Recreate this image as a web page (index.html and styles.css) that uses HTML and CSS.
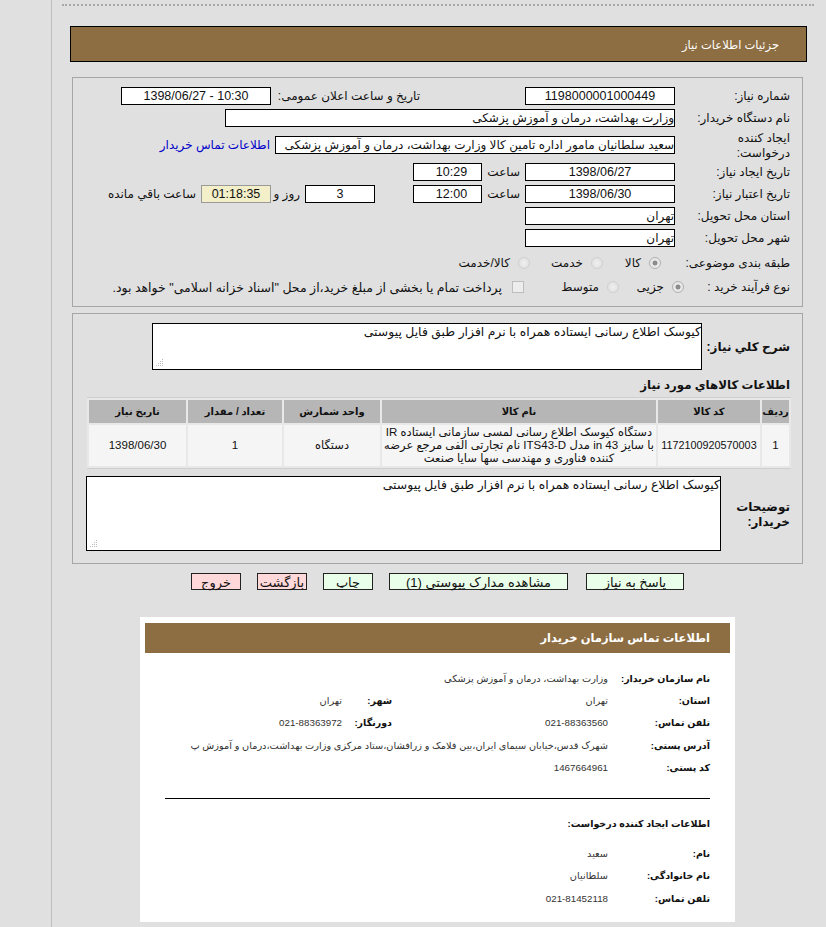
FILE: index.html
```html
<!DOCTYPE html>
<html lang="fa">
<head>
    <meta charset="UTF-8">
    <meta name="viewport" content="width=device-width, initial-scale=1.0">
    <title>جزئیات اطلاعات نیاز</title>
    <link rel="stylesheet" href="styles.css">
</head>
<body>
    <div class="side"></div>

    <div class="main" dir="rtl">
        <div class="dots"></div>

        <div class="page-title">جزئیات اطلاعات نیاز</div>

        <div class="panel panel-info">
            <div class="row">
                <div class="lbl">شماره نیاز:</div>
                <div class="field w150 center">1198000001000449</div>
                <div class="txt m105 t-pub">تاریخ و ساعت اعلان عمومی:</div>
                <div class="field w150 center" dir="ltr">1398/06/27 - 10:30</div>
            </div>
            <div class="row">
                <div class="lbl">نام دستگاه خریدار:</div>
                <div class="field w450">وزارت بهداشت، درمان و آموزش پزشکی</div>
            </div>
            <div class="row row-tall">
                <div class="lbl lbl-wrap">ایجاد کننده درخواست:</div>
                <div class="field w400">سعید سلطانیان مامور اداره تامین کالا وزارت بهداشت، درمان و آموزش پزشکی</div>
                <a class="link" href="#">اطلاعات تماس خریدار</a>
            </div>
            <div class="row">
                <div class="lbl">تاریخ ایجاد نیاز:</div>
                <div class="field w150 center">1398/06/27</div>
                <div class="txt w-saat">ساعت</div>
                <div class="field w69 center">10:29</div>
            </div>
            <div class="row">
                <div class="lbl">تاریخ اعتبار نیاز:</div>
                <div class="field w150 center">1398/06/30</div>
                <div class="txt w-saat">ساعت</div>
                <div class="field w69 center">12:00</div>
                <div class="field w70 center m38">3</div>
                <div class="txt w-rooz">روز و</div>
                <div class="timer">01:18:35</div>
                <div class="txt">ساعت باقي مانده</div>
            </div>
            <div class="row">
                <div class="lbl">استان محل تحویل:</div>
                <div class="field w150">تهران</div>
            </div>
            <div class="row">
                <div class="lbl">شهر محل تحویل:</div>
                <div class="field w150">تهران</div>
            </div>
            <div class="row row-opts row-opts-first">
                <div class="lbl lbl-narrow">طبقه بندی موضوعی:</div>
                <label class="opt o58"><input type="radio" name="cat" checked disabled>کالا</label>
                <label class="opt o73"><input type="radio" name="cat" disabled>خدمت</label>
                <label class="opt"><input type="radio" name="cat" disabled>کالا/خدمت</label>
            </div>
            <div class="row row-opts">
                <div class="lbl lbl-buy">نوع فرآیند خرید :</div>
                <label class="opt o65"><input type="radio" name="buy" checked disabled>جزیی</label>
                <label class="opt o95"><input type="radio" name="buy" disabled>متوسط</label>
                <label class="opt opt-check"><input type="checkbox" disabled>پرداخت تمام یا بخشی از مبلغ خرید،از محل "اسناد خزانه اسلامی" خواهد بود.</label>
            </div>
        </div>

        <div class="panel panel-desc">
            <div class="desc-row">
                <div class="lbl-big w88">شرح کلي نياز:</div>
                <div class="memo memo-small">کیوسک اطلاع رسانی ایستاده همراه با نرم افزار طبق فایل پیوستی</div>
            </div>

            <div class="section-title">اطلاعات كالاهاي مورد نياز</div>

            <table class="items">
                <thead>
                    <tr>
                        <th class="c-no">ردیف</th>
                        <th class="c-code">کد کالا</th>
                        <th class="c-name">نام کالا</th>
                        <th class="c-unit">واحد شمارش</th>
                        <th class="c-qty">تعداد / مقدار</th>
                        <th>تاریخ نیاز</th>
                    </tr>
                </thead>
                <tbody>
                    <tr>
                        <td>1</td>
                        <td class="code-cell">1172100920570003</td>
                        <td>دستگاه کیوسک اطلاع رسانی لمسی سازمانی ایستاده IR با سایز 43 in مدل ITS43-D نام تجارتی الفی مرجع عرضه کننده فناوری و مهندسی سها سایا صنعت</td>
                        <td>دستگاه</td>
                        <td>1</td>
                        <td>1398/06/30</td>
                    </tr>
                </tbody>
            </table>

            <div class="desc-row desc-row-2">
                <div class="lbl-big w69">توضیحات خریدار:</div>
                <div class="memo memo-big">کیوسک اطلاع رسانی ایستاده همراه با نرم افزار طبق فایل پیوستی</div>
            </div>
        </div>

        <div class="buttons">
            <a class="btn btn-ok w98" href="#">پاسخ به نیاز</a>
            <a class="btn btn-ok w180" href="#">مشاهده مدارک پیوستي (1)</a>
            <a class="btn btn-ok w50" href="#">چاپ</a>
            <a class="btn btn-no w50" href="#">بازگشت</a>
            <a class="btn btn-no w50" href="#">خروج</a>
        </div>

        <div class="contact">
            <div class="contact-title">اطلاعات تماس سازمان خریدار</div>
            <div class="contact-body">
                <div class="c-row">
                    <div class="c-lbl">نام سازمان خریدار:</div>
                    <div class="c-val">وزارت بهداشت، درمان و آموزش پزشکی</div>
                </div>
                <div class="c-row">
                    <div class="c-lbl">استان:</div>
                    <div class="c-val c-half">تهران</div>
                    <div class="c-lbl c-lbl2">شهر:</div>
                    <div class="c-val">تهران</div>
                </div>
                <div class="c-row">
                    <div class="c-lbl">تلفن تماس:</div>
                    <div class="c-val c-half">021-88363560</div>
                    <div class="c-lbl c-lbl2">دورنگار:</div>
                    <div class="c-val">021-88363972</div>
                </div>
                <div class="c-row">
                    <div class="c-lbl">آدرس پستی:</div>
                    <div class="c-val">شهرک قدس،خیابان سیمای ایران،بین فلامک و زرافشان،ستاد مرکزی وزارت بهداشت،درمان و آموزش پ</div>
                </div>
                <div class="c-row">
                    <div class="c-lbl">کد پستی:</div>
                    <div class="c-val">1467664961</div>
                </div>

                <hr class="c-line">

                <div class="c-head">اطلاعات ایجاد کننده درخواست:</div>

                <div class="c-row">
                    <div class="c-lbl">نام:</div>
                    <div class="c-val">سعید</div>
                </div>
                <div class="c-row">
                    <div class="c-lbl">نام خانوادگی:</div>
                    <div class="c-val">سلطانیان</div>
                </div>
                <div class="c-row">
                    <div class="c-lbl">تلفن تماس:</div>
                    <div class="c-val">021-81452118</div>
                </div>
            </div>
        </div>
    </div>
</body>
</html>
```

FILE: styles.css
```css
:root {
    --page: #e0e0e0;
    --brown: #8d6e42;
    --line: #a6a6a6;
}

* {
    margin: 0;
    padding: 0;
    box-sizing: border-box;
    font-family: "Liberation Sans", "DejaVu Sans", sans-serif;
}

html,
body {
    height: 927px;
    overflow: hidden;
}

body {
    display: flex;
    background-color: var(--page);
    color: #111;
    font-size: 12px;
}

.side {
    width: 52px;
    flex-shrink: 0;
    border-right: 1px solid #bdbdbd;
}

.main {
    flex: 1;
    padding: 4px 13px 0 10px;
}

.dots {
    height: 2px;
    border-top: 2px dotted #a8a8a8;
}

.page-title {
    height: 36px;
    margin: 20px 7px 0 8px;
    padding-right: 27px;
    line-height: 37px;
    background-color: var(--brown);
    border: 1px solid #000;
    color: #fff;
    font-size: 11.5px;
}

.panel {
    margin: 0 11px 0 10px;
    border: 1px solid var(--line);
    padding-right: 12px;
}

.panel-info {
    height: 230px;
    margin-top: 15px;
    padding-top: 7px;
}

.panel-desc {
    height: 251px;
    margin-top: 6px;
    padding-top: 9px;
    padding-left: 13px;
}

/* form rows */
.row {
    display: flex;
    align-items: center;
    height: 22px;
}

.row-tall {
    height: 32px;
}

.row-opts {
    height: 24px;
}

.row-opts-first {
    margin-top: 2px;
}

.lbl {
    width: 115px;
    flex-shrink: 0;
    padding-top: 1px;
    line-height: 15px;
}

.lbl-wrap {
    padding-left: 45px;
}

.lbl-narrow {
    width: 129px;
}

.lbl-buy {
    width: 106px;
}

.field,
.timer {
    height: 18px;
    line-height: 16px;
    border: 1px solid #000;
    background-color: #fff;
    white-space: nowrap;
    overflow: hidden;
}

.center {
    text-align: center;
    font-size: 12.5px;
}

.timer {
    width: 70px;
    text-align: center;
    font-size: 12.5px;
    background-color: #f3efc9;
    border-color: #999;
}

.w69 { width: 69px; }
.w70 { width: 70px; }
.w150 { width: 150px; }
.w400 { width: 400px; }
.w450 { width: 450px; }

.txt {
    margin: 0 5px;
    white-space: nowrap;
}

.m105 {
    margin-right: 105px;
}

.t-pub {
    width: 144px;
}

.w-saat {
    width: 33px;
}

.m38 {
    margin-right: 38px;
}

.w-rooz {
    width: 24px;
}

.link {
    margin-right: 5px;
    color: #0000c8;
    text-decoration: none;
    white-space: nowrap;
}

.opt {
    display: flex;
    align-items: center;
    white-space: nowrap;
}

.opt input {
    appearance: none;
    width: 12px;
    height: 12px;
    margin-left: 8px;
    flex-shrink: 0;
    border: 1px solid #cfcfcf;
    border-radius: 50%;
    background: radial-gradient(circle, #f0f0f0, #dcdcdc);
}

.opt input:checked {
    background: radial-gradient(circle, #8c8c8c 0, #8c8c8c 30%, #e8e8e8 40%);
    border-color: #b0b0b0;
}

.opt input[type="checkbox"] {
    margin-left: 10px;
    border-radius: 0;
    border-color: #bdbdbd;
    background: #ededed;
}

.opt-check {
    font-size: 12.5px;
}

.o58 { width: 58px; }
.o65 { width: 65px; }
.o73 { width: 73px; }
.o95 { width: 95px; }

/* description boxes */
.desc-row {
    display: flex;
    align-items: center;
}

.desc-row-2 {
    margin-top: 7px;
}

.lbl-big {
    flex-shrink: 0;
    padding-top: 2px;
    font-weight: bold;
    font-size: 12px;
    line-height: 15px;
}

.w88 { width: 88px; white-space: nowrap; }
.w69 { width: 69px; padding-left: 8px; }

.memo {
    position: relative;
    border: 1px solid #000;
    background-color: #fff;
    font-size: 12.4px;
    line-height: 16px;
}

.memo-small {
    width: 550px;
    height: 47px;
}

.memo-big {
    width: 635px;
    height: 75px;
}

.memo::after {
    content: "";
    position: absolute;
    left: 3px;
    bottom: 3px;
    width: 1px;
    height: 1px;
    background-color: #bbb;
    box-shadow: 2px 0 #bbb, 4px 0 #bbb, 6px 0 #bbb, 2px -2px #bbb, 4px -2px #bbb, 6px -2px #bbb, 4px -4px #bbb, 6px -4px #bbb, 6px -6px #bbb;
}

.section-title {
    margin: 7px 0 4px;
    height: 16px;
    line-height: 16px;
    font-weight: bold;
    font-size: 11.8px;
}

/* items table */
.items {
    width: 704px;
    margin-right: -1px;
    border-collapse: separate;
    border-spacing: 2px;
    border-top: 1px solid #cfcfcf;
    border-bottom: 1px solid #cfcfcf;
    background-color: #e8e8e8;
    table-layout: fixed;
}

.items th {
    height: 23px;
    padding: 0;
    background-color: #b6b6b6;
    font-size: 10px;
    font-weight: bold;
}

.items td {
    height: 41px;
    padding: 0;
    background-color: #f5f5f5;
    text-align: center;
    font-size: 11.5px;
    line-height: 13px;
}

.items .code-cell {
    font-size: 10.8px;
}

.c-no { width: 27px; }
.c-code { width: 102px; }
.c-name { width: 274px; }
.c-unit { width: 96px; }
.c-qty { width: 94px; }

/* buttons */
.buttons {
    display: flex;
    gap: 16px;
    margin: 9px 130px 0 0;
}

.btn {
    height: 17px;
    line-height: 18px;
    border: 1px solid #222;
    color: #111;
    font-size: 13px;
    text-align: center;
    text-decoration: none;
    white-space: nowrap;
}

.btn-ok { background-color: #e9ffe9; }
.btn-no { background-color: #ffd9d9; }

.w50 { width: 50px; }
.w98 { width: 98px; margin-left: 2px; }
.w180 { width: 179px; }

/* contact box */
.contact {
    width: 595px;
    height: 305px;
    margin: 27px 79px 0 0;
    padding: 6px 5px 0;
    background-color: #fff;
}

.contact-title {
    height: 30px;
    padding-right: 20px;
    line-height: 30px;
    background-color: var(--brown);
    color: #fff;
    font-size: 11.5px;
    font-weight: bold;
}

.contact-body {
    padding: 14px 20px 0;
}

.c-row {
    display: flex;
    align-items: center;
    height: 22.3px;
    font-size: 9.75px;
}

.c-lbl {
    width: 102px;
    flex-shrink: 0;
    font-weight: bold;
    font-size: 9.5px;
    white-space: nowrap;
}

.c-lbl2 {
    width: 50px;
}

.c-val {
    color: #333;
    white-space: nowrap;
}

.c-half {
    width: 216px;
}

.c-line {
    height: 1px;
    margin: 20px 0 17px;
    border: 0;
    background-color: #000;
}

.c-head {
    height: 15px;
    margin-bottom: 11px;
    line-height: 15px;
    font-size: 9.5px;
    font-weight: bold;
}
```
